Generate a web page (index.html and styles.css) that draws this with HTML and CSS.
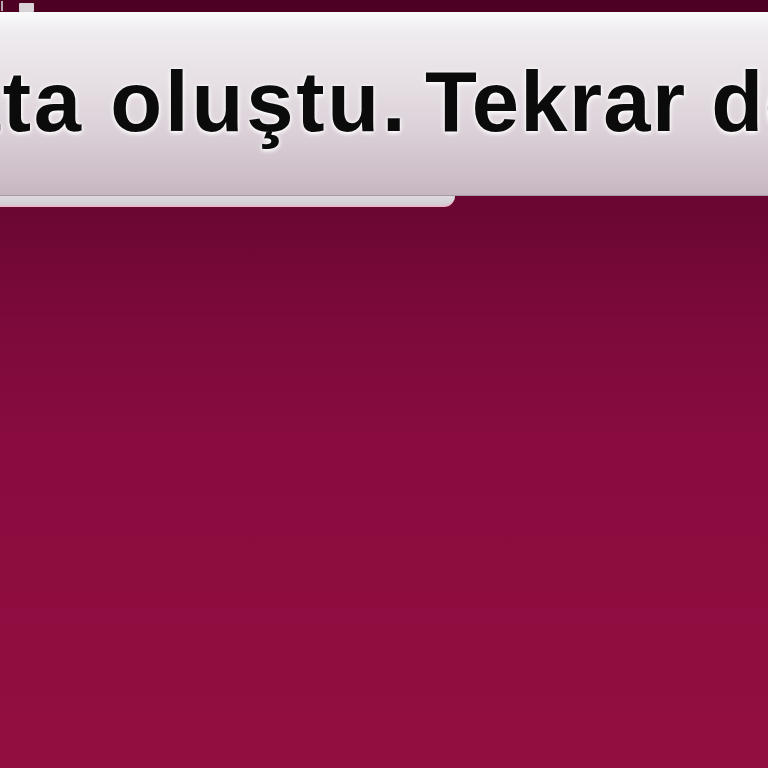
FILE: index.html
```html
<!DOCTYPE html>
<html lang="tr">
<head>
<meta charset="utf-8">
<title>Hata</title>
<link rel="stylesheet" href="styles.css">
</head>
<body>
<div class="screen">
  <div class="statusbar">
    <span class="status-dot"></span>
    <span class="status-chip"></span>
  </div>
  <div class="toast-stack">
    <div class="toast">
      <p class="toast-text"><span class="part-a">Bir hata oluştu. </span><span class="part-b">Tekrar deneyin.</span></p>
    </div>
    <div class="toast-under"></div>
  </div>
</div>
</body>
</html>
```
FILE: styles.css
```css
html, body {
  margin: 0;
  padding: 0;
}
body {
  width: 768px;
  height: 768px;
  overflow: hidden;
  background: linear-gradient(180deg, #5e0429 0px, #6b0632 210px, #7c0a3a 320px, #890c3e 450px, #8f0d40 620px, #920e41 768px);
}
.screen {
  width: 768px;
  height: 768px;
  display: flex;
  flex-direction: column;
}
.statusbar {
  height: 12px;
  background: #4d0021;
  display: flex;
  align-items: flex-start;
  gap: 16px;
  padding-left: 1px;
  flex-shrink: 0;
}
.status-dot {
  width: 2px;
  height: 10px;
  margin-top: 1px;
  background: #b9a9b3;
}
.status-chip {
  width: 15px;
  height: 9px;
  margin-top: 3px;
  background: #d9d3d8;
  border-radius: 1px;
}
.toast-stack {
  display: flex;
  flex-direction: column;
}
.toast {
  height: 184px;
  box-sizing: border-box;
  padding-top: 47px;
  overflow: hidden;
  background: linear-gradient(180deg, #fafafb 0px, #efecef 20px, #e6dfe4 70px, #dbd0d8 120px, #cdbec8 165px, #c7b6c1 184px);
  border-bottom: 1px solid #a89aa4;
  white-space: nowrap;
}
.toast-text {
  margin: 0 0 0 -255px;
  font-family: "Liberation Sans", Arial, sans-serif;
  font-weight: 700;
  font-size: 85px;
  line-height: 85px;
  color: #0b0b0c;
  text-shadow: 0 0 3px #ffffff, 0 2px 4px rgba(255, 255, 255, 0.9), 0 0 6px rgba(255, 255, 255, 0.6);
}
.part-a {
  letter-spacing: 2.8px;
}
.part-b {
  margin-left: -10px;
  letter-spacing: 1.3px;
}
.toast-under {
  width: 455px;
  height: 9px;
  background: linear-gradient(180deg, #dedadf 0px, #d2cdd3 100%);
  border-bottom: 2px solid #e9b9cc;
  border-bottom-right-radius: 12px;
}
```
